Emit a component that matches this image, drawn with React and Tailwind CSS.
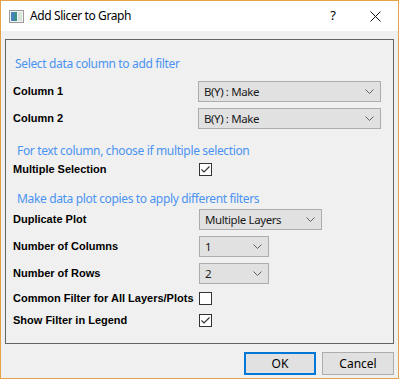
import React from 'react';

const font = { fontFamily: '"Noto Sans", "Open Sans", sans-serif' };

const Chevron = () => (
    <svg width="9" height="5" viewBox="0 0 9 5" className="shrink-0">
        <path d="M0.5 0.5 L4.5 4.5 L8.5 0.5" fill="none" stroke="#606060" strokeWidth="1" />
    </svg>
);

const Select = ({ value, width }) => (
    <div
        className={`h-[21px] ${width} flex items-center justify-between pl-[5px] pr-[6px] bg-[#e1e1e1] border border-[#adadad] text-[11.5px] tracking-[-0.4px] text-[#1a1a1a]`}
        style={font}
    >
        <span className="leading-none">{value}</span>
        <Chevron />
    </div>
);

const Checkbox = ({ checked }) => (
    <div className="w-[13px] h-[13px] border border-[#333333] bg-white flex items-center justify-center">
        {checked && (
            <svg width="11" height="11" viewBox="0 0 11 11">
                <path d="M1.5 5.5 L4 8 L9.5 2.5" fill="none" stroke="#333333" strokeWidth="1.2" />
            </svg>
        )}
    </div>
);

const Label = ({ children }) => (
    <div className="w-[185px] shrink-0 text-[11px] font-bold text-black font-['Liberation_Sans',sans-serif]">
        {children}
    </div>
);

const Heading = ({ children, className }) => (
    <div className={`h-[16px] flex items-center text-[12px] tracking-[-0.35px] text-[#4a93f2] ${className}`} style={font}>
        {children}
    </div>
);

const Row = ({ label, className, children }) => (
    <div className={`flex items-center ${className}`}>
        <Label>{label}</Label>
        {children}
    </div>
);

export default function App() {
    return (
        <div className="w-[399px] h-[379px] border border-[#e3a24a] flex flex-col bg-[#f0f0f0] overflow-hidden">
            {/* Title bar */}
            <div className="h-[30px] bg-white flex items-center shrink-0">
                <svg width="15" height="13" viewBox="0 0 15 13" className="ml-[8px]">
                    <rect x="0.5" y="0.5" width="14" height="12" fill="#f4f4f4" stroke="#9a9a9a" />
                    <rect x="2" y="2" width="6" height="9" fill="#3a8f8a" />
                    <rect x="2" y="2" width="3" height="9" fill="#4a7fc0" />
                    <rect x="9" y="2" width="4" height="9" fill="#d8e4d8" />
                </svg>
                <span className="ml-[6px] text-[12px] tracking-[-0.4px] text-black" style={font}>Add Slicer to Graph</span>
                <span className="ml-auto mr-[34px] text-[13px] text-black" style={font}>?</span>
                <svg width="11" height="11" viewBox="0 0 11 11" className="mr-[17px]">
                    <path d="M0.5 0.5 L10.5 10.5 M10.5 0.5 L0.5 10.5" stroke="#111" strokeWidth="1" />
                </svg>
            </div>

            {/* Body */}
            <div className="flex-1 flex flex-col pl-[4px] pt-[8px]">
                <div className="w-[389px] h-[305px] border border-[#646464] flex flex-col pl-[7px]">
                    <Heading className="mt-[16px] pl-[2px]">Select data column to add filter</Heading>
                    <Row label="Column 1" className="mt-[9px] h-[21px]">
                        <Select value="B(Y) : Make" width="w-[183px]" />
                    </Row>
                    <Row label="Column 2" className="mt-[6px] h-[21px]">
                        <Select value="B(Y) : Make" width="w-[183px]" />
                    </Row>
                    <Heading className="mt-[14px] pl-[4px]">For text column, choose if multiple selection</Heading>
                    <Row label="Multiple Selection" className="h-[20px] pl-0">
                        <div className="ml-[1px]"><Checkbox checked /></div>
                    </Row>
                    <Heading className="mt-[12px] pl-[4px]">Make data plot copies to apply different filters</Heading>
                    <Row label="Duplicate Plot" className="mt-[2px] h-[21px]">
                        <div className="ml-[1px]"><Select value="Multiple Layers" width="w-[123px]" /></div>
                    </Row>
                    <Row label="Number of Columns" className="mt-[6px] h-[21px]">
                        <div className="ml-[1px]"><Select value="1" width="w-[70px]" /></div>
                    </Row>
                    <Row label="Number of Rows" className="mt-[6px] h-[21px]">
                        <div className="ml-[1px]"><Select value="2" width="w-[70px]" /></div>
                    </Row>
                    <Row label="Common Filter for All Layers/Plots" className="mt-[4px] h-[20px]">
                        <div className="ml-[1px]"><Checkbox /></div>
                    </Row>
                    <Row label="Show Filter in Legend" className="mt-[2px] h-[20px]">
                        <div className="ml-[1px]"><Checkbox checked /></div>
                    </Row>
                </div>

                {/* Buttons */}
                <div className="flex justify-end gap-[6px] mt-[8px] pr-[4px]">
                    <button className="w-[72px] h-[23px] bg-[#e1e1e1] border-2 border-[#0078d7] text-[12px] text-black" style={font}>
                        OK
                    </button>
                    <button className="w-[72px] h-[23px] bg-[#e1e1e1] border border-[#adadad] text-[12px] text-black" style={font}>
                        Cancel
                    </button>
                </div>
            </div>
        </div>
    );
}
